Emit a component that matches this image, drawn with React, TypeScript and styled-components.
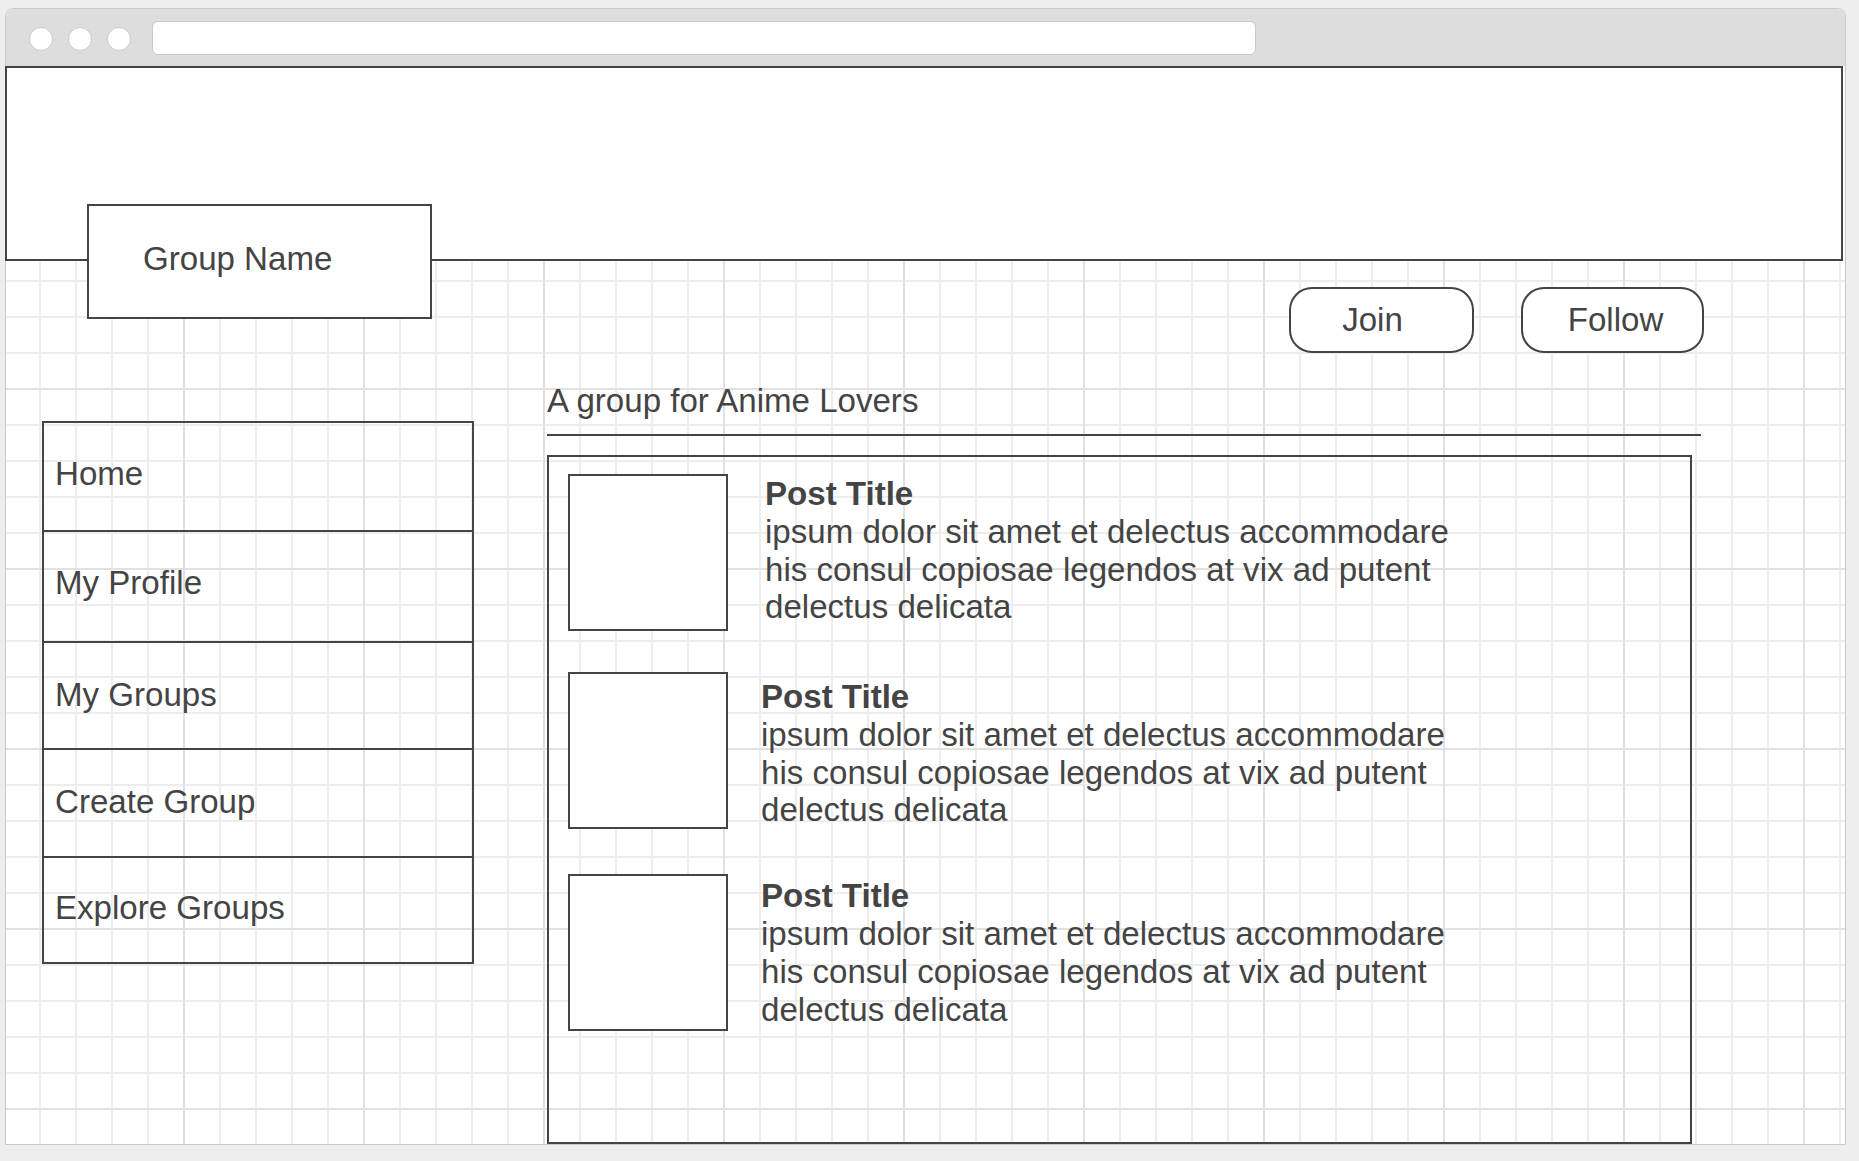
import React from 'react'
import styled, { createGlobalStyle } from 'styled-components'

const ink = '#444444'
const font = '"Liberation Sans", Arial, Helvetica, sans-serif'
const textSize = '33.1px'

const GlobalStyle = createGlobalStyle`
  html, body {
    margin: 0;
    padding: 0;
    background: #eeeeee;
  }
  body {
    font-family: ${font};
    color: ${ink};
  }
  * {
    box-sizing: border-box;
  }
`

const Page = styled.div`
  width: 1859px;
  height: 1161px;
  padding: 8px 0 0 5px;
  overflow: hidden;
`

const Window = styled.div`
  width: 1841px;
  height: 1137px;
  display: flex;
  flex-direction: column;
  border: 1px solid #cacaca;
  border-radius: 8px 8px 0 0;
  background: #fff;
`

const TopBar = styled.div`
  height: 57px;
  flex-shrink: 0;
  display: flex;
  align-items: center;
  gap: 15px;
  padding-left: 23px;
  background: #dddddd;
  border-radius: 7px 7px 0 0;
`

const Dot = styled.span`
  width: 24px;
  height: 24px;
  margin-top: 2px;
  border-radius: 50%;
  background: #fff;
  border: 1px solid #c9c9c9;
`

const AddressBar = styled.div`
  width: 1104px;
  height: 34px;
  margin-left: 6px;
  border-radius: 6px;
  background: #fff;
  border: 1px solid #c9c9c9;
`

const Header = styled.div`
  width: 1838px;
  height: 195px;
  margin-left: -1px;
  flex-shrink: 0;
  border: 2px solid ${ink};
  background: #fff;
`

const Canvas = styled.div`
  flex: 1;
  min-height: 0;
  display: flex;
  flex-direction: column;
  background-color: #fff;
  background-image: linear-gradient(to right, #e1e1e1 2px, transparent 2px),
    linear-gradient(to bottom, #e1e1e1 2px, transparent 2px),
    linear-gradient(to right, #ededed 2px, transparent 2px),
    linear-gradient(to bottom, #ededed 2px, transparent 2px);
  background-size: 180px 100%, 100% 180px, 36px 100%, 100% 36px;
  background-position: 177px 0, 0 127px, 33px 0, 0 19px;
`

const TopRow = styled.div`
  height: 92px;
  flex-shrink: 0;
  display: flex;
  align-items: flex-start;
  padding: 0 141px 0 81px;
`

const GroupTag = styled.div`
  position: relative;
  width: 345px;
  height: 115px;
  margin-top: -57px;
  display: flex;
  align-items: center;
  padding: 0 0 5px 54px;
  border: 2px solid ${ink};
  background: #fff;
  font-size: ${textSize};
`

const Actions = styled.div`
  margin-left: auto;
  margin-top: 26px;
  display: flex;
  gap: 47px;
`

const PillButton = styled.button<{ $w: number; $shift: number }>`
  width: ${({ $w }) => $w}px;
  height: 66px;
  display: flex;
  align-items: center;
  justify-content: center;
  padding: 0;
  padding-left: ${({ $shift }) => Math.max($shift, 0) * 2}px;
  padding-right: ${({ $shift }) => Math.max(-$shift, 0) * 2}px;
  border: 2px solid ${ink};
  border-radius: 23px;
  background: #fff;
  color: ${ink};
  font-family: ${font};
  font-size: ${textSize};
`

const Body = styled.div`
  flex: 1;
  min-height: 0;
  display: grid;
  grid-template-columns: 432px 1154px;
  grid-template-rows: 1fr;
  column-gap: 73px;
  padding-left: 36px;
`

const SideNav = styled.nav`
  align-self: start;
  margin-top: 68px;
  display: flex;
  flex-direction: column;
  border: 2px solid ${ink};
`

const NavItem = styled.div<{ $h: number; $lift: number }>`
  height: ${({ $h }) => $h}px;
  display: flex;
  align-items: center;
  padding: 0 0 ${({ $lift }) => $lift}px 11px;
  font-size: ${textSize};
  & + & {
    border-top: 2px solid ${ink};
  }
`

const Main = styled.main`
  display: flex;
  flex-direction: column;
  min-height: 0;
  padding-top: 29px;
`

const Heading = styled.h2`
  margin: 0;
  font-size: ${textSize};
  font-weight: 400;
  line-height: 38px;
`

const Rule = styled.div`
  height: 2px;
  margin-top: 14px;
  background: ${ink};
`

const Panel = styled.section`
  flex: 1;
  width: 1145px;
  margin-top: 19px;
  display: flex;
  flex-direction: column;
  padding: 17px 0 0 19px;
  border: 2px solid ${ink};
`

const Post = styled.article<{ $top: number }>`
  display: flex;
  margin-top: ${({ $top }) => $top}px;
`

const Thumb = styled.div`
  width: 160px;
  height: 157px;
  flex-shrink: 0;
  border: 2px solid ${ink};
  background: #fff;
`

const PostText = styled.div<{ $dx: number; $dy: number }>`
  margin-left: ${({ $dx }) => $dx}px;
  margin-top: ${({ $dy }) => $dy}px;
  font-size: ${textSize};
  line-height: 37.8px;
`

const PostTitle = styled.div`
  font-weight: 700;
`

const Line = styled.div`
  white-space: nowrap;
`

const navItems = [
  { label: 'Home', h: 107, lift: 5 },
  { label: 'My Profile', h: 111, lift: 8 },
  { label: 'My Groups', h: 107, lift: 2 },
  { label: 'Create Group', h: 108, lift: 3 },
  { label: 'Explore Groups', h: 106, lift: 4 },
]

const posts = [
  { top: 0, dx: 37, dy: 1 },
  { top: 41, dx: 33, dy: 6 },
  { top: 45, dx: 33, dy: 3 },
]

const postLines = [
  'ipsum dolor sit amet et delectus accommodare',
  'his consul copiosae legendos at vix ad putent',
  'delectus delicata',
]

export default function App() {
  return (
    <Page>
      <GlobalStyle />
      <Window>
        <TopBar>
          <Dot />
          <Dot />
          <Dot />
          <AddressBar />
        </TopBar>
        <Header />
        <Canvas>
          <TopRow>
            <GroupTag>Group Name</GroupTag>
            <Actions>
              <PillButton $w={185} $shift={-9}>
                Join
              </PillButton>
              <PillButton $w={183} $shift={3}>
                Follow
              </PillButton>
            </Actions>
          </TopRow>
          <Body>
            <SideNav>
              {navItems.map((item) => (
                <NavItem key={item.label} $h={item.h} $lift={item.lift}>
                  {item.label}
                </NavItem>
              ))}
            </SideNav>
            <Main>
              <Heading>A group for Anime Lovers</Heading>
              <Rule />
              <Panel>
                {posts.map((p, i) => (
                  <Post key={i} $top={p.top}>
                    <Thumb />
                    <PostText $dx={p.dx} $dy={p.dy}>
                      <PostTitle>Post Title</PostTitle>
                      {postLines.map((line) => (
                        <Line key={line}>{line}</Line>
                      ))}
                    </PostText>
                  </Post>
                ))}
              </Panel>
            </Main>
          </Body>
        </Canvas>
      </Window>
    </Page>
  )
}
